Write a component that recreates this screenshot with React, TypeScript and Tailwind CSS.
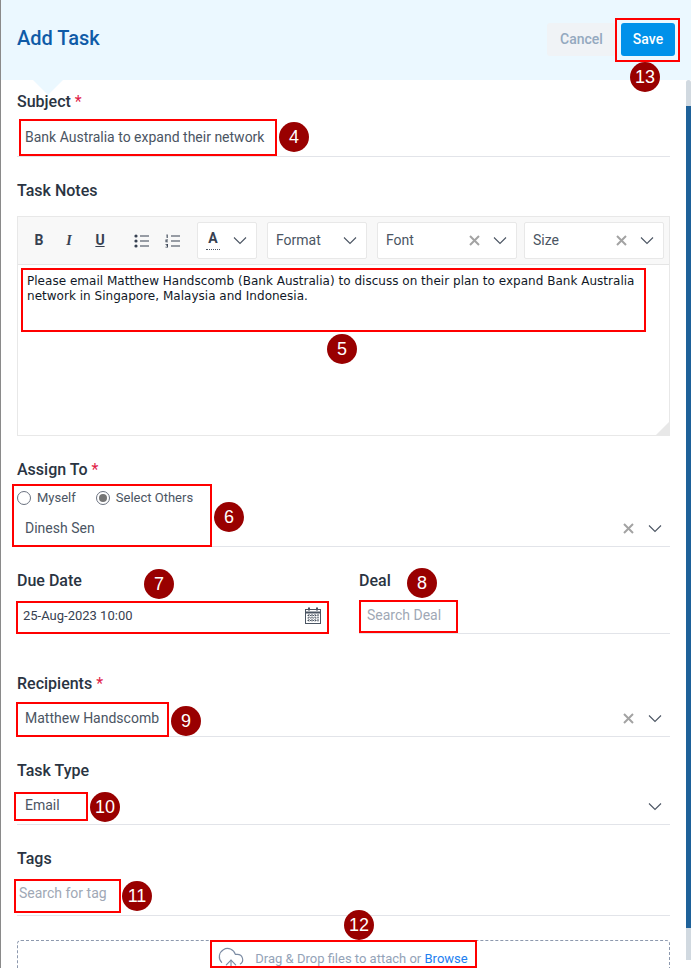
import React from 'react'
import { CloudUpload } from 'lucide-react'

const Chevron = () => (
  <svg width="16" height="9" viewBox="0 0 16 9" fill="none" stroke="#4b5563" strokeWidth="1.1" className="shrink-0"><path d="M2 1.5 8 7.5 14 1.5" /></svg>
)

const Cross = () => (
  <svg width="11" height="11" viewBox="0 0 11 11" fill="none" stroke="#a3a3a3" strokeWidth="2" className="shrink-0"><path d="M1 1 10 10M10 1 1 10" /></svg>
)

const Label = ({ text, required, className = '' }: { text: string; required?: boolean; className?: string }) => (
  <div className={`h-5 text-[16px] leading-[22px] font-medium text-[#2a3442] ${className}`}>
    {text}
    {required && <span className="text-[#e11d48] font-normal"> *</span>}
  </div>
)

const Note = ({ n, className }: { n: number; className: string }) => (
  <div className={`absolute w-[30px] h-[30px] rounded-full bg-[#990000] text-white flex items-center justify-center text-[18px] font-['Liberation_Sans',sans-serif] ${className}`}>{n}</div>
)

const Selectbox = ({ label, className, clear }: { label: string; className: string; clear?: boolean }) => (
  <div className={`h-[37px] bg-white border border-[#e8e8e8] rounded-[2px] flex items-center pl-2 pr-2 text-[14px] text-[#4b5563] ${className}`}>
    <span className="flex-1">{label}</span>
    {clear && <span className="mr-[12px]"><Cross /></span>}
    <Chevron />
  </div>
)

function Toolbar() {
  return (
    <div className="h-[48px] bg-[#f8f8f8] border-b border-[#e5e5e5] flex items-center">
      <span className="ml-[15px] w-[12px] text-center text-[14px] font-bold text-[#374151]">B</span>
      <span className="ml-[18px] w-[12px] text-center text-[14px] italic font-bold text-[#374151] font-['Liberation_Serif',serif]">I</span>
      <span className="ml-[19px] w-[12px] text-center text-[14px] font-bold underline text-[#374151]">U</span>
      <svg className="ml-[28px]" width="15" height="14" viewBox="0 0 15 14" fill="#374151">
        <circle cx="2" cy="2" r="1.6" /><circle cx="2" cy="7" r="1.6" /><circle cx="2" cy="12" r="1.6" />
        <path d="M6 1.5h9v1H6zM6 6.5h9v1H6zM6 11.5h9v1H6z" />
      </svg>
      <svg className="ml-[16px]" width="15" height="14" viewBox="0 0 15 14" fill="#374151">
        <path d="M1.5 0.5h1.2v3.5h-1zM0.5 5.5h2.5v1H1.5v1H3v.8H.5zM.5 10h2.5v3.5H.5v-.8h1.6v-.6H1v-.7h1.1v-.6H.5z" />
        <path d="M6 1.5h9v1H6zM6 6.5h9v1H6zM6 11.5h9v1H6z" />
      </svg>
      <div className="ml-[17px] w-[60px] h-[37px] bg-white border border-[#e8e8e8] rounded-[2px] flex items-center pl-2 pr-2 justify-between">
        <div className="flex flex-col items-center w-[14px]">
          <span className="text-[14px] leading-[14px] font-bold text-[#374151]">A</span>
          <span className="w-[14px] h-[2px] mt-[3px] border-b border-dotted border-[#4b5563]"></span>
        </div>
        <Chevron />
      </div>
      <Selectbox label="Format" className="ml-[10px] w-[100px]" />
      <Selectbox label="Font" className="ml-[10px] w-[140px]" clear />
      <Selectbox label="Size" className="ml-[7px] w-[140px]" clear />
    </div>
  )
}

const Underlined = ({ className = '', children }: { className?: string; children: React.ReactNode }) => (
  <div className={`border-b border-[#e2e4e9] flex items-center text-[14px] text-[#4b5563] box-content ${className}`}>{children}</div>
)

const Clearers = () => (
  <div className="ml-auto flex items-center gap-[13px] pr-[7px]">
    <Cross />
    <Chevron />
  </div>
)

export default function App() {
  return (
    <div className="relative w-[691px] h-[968px] overflow-hidden bg-white border-l border-[#8a8a8a] font-['Roboto',sans-serif]">
      <div className="h-20 bg-[#ebf8ff] flex items-center pl-4 pr-4">
        <h1 className="text-[20px] font-medium text-[#0f5ba7] -mt-1">Add Task</h1>
        <button className="ml-auto w-[69px] h-[33px] -mt-px rounded-[3px] bg-[#f0f3f6] text-[14px] font-medium text-[#94a9bf]">Cancel</button>
        <button className="ml-[5px] w-[54px] h-[33px] -mt-px rounded-[3px] bg-[#0091ea] text-[14px] font-medium text-white">Save</button>
      </div>
      <div className="absolute left-[32px] top-[80px] w-0 h-0 border-l-[15px] border-r-[15px] border-t-[15px] border-l-transparent border-r-transparent border-t-[#ebf8ff]"></div>

      <div className="absolute right-0 top-20 bottom-[8px] w-[5px] rounded-t bg-[#d1d9e0]">
        <div className="mt-[26px] h-[822px] bg-[#1e6199]"></div>
      </div>

      <div className="pl-4 w-[669px] pt-[11px]">
        <Label text="Subject" required />
        <Underlined className="mt-[9px] h-9 pl-2"><span className="mb-[2px]">Bank Australia to expand their network</span></Underlined>

        <Label text="Task Notes" className="mt-[23px]" />
        <div className="mt-4 h-[220px] border border-[#e8e8e8] relative">
          <Toolbar />
          <div className="pt-[9px] pl-[9px] pr-[20px] text-[12px] leading-[15px] tracking-[0.02px] text-[#111827] font-['DejaVu_Sans',sans-serif]">
            Please email Matthew Handscomb (Bank Australia) to discuss on their plan to expand Bank Australia network in Singapore, Malaysia and Indonesia.
          </div>
          <div className="absolute right-0 bottom-0 w-0 h-0 border-l-[13px] border-t-[13px] border-l-transparent border-t-transparent border-b-0 border-r-[13px] border-r-[#e8e8e8]"></div>
        </div>

        <Label text="Assign To" required className="mt-[23px]" />
        <div className="mt-[9px] h-5 flex items-center text-[13px] text-[#4b5563]">
          <span className="w-[14px] h-[14px] rounded-full border border-[#6b7280] bg-white"></span>
          <span className="ml-[6px]">Myself</span>
          <span className="ml-[20px] w-[14px] h-[14px] rounded-full border border-[#6b7280] bg-white flex items-center justify-center"><span className="w-2 h-2 rounded-full bg-[#757575]"></span></span>
          <span className="ml-[6px]">Select Others</span>
        </div>
        <Underlined className="mt-[2px] h-9 pl-2">
          Dinesh Sen
          <Clearers />
        </Underlined>

        <div className="mt-[23px] flex gap-[30px]">
          <div className="w-[312px]">
            <Label text="Due Date" />
            <div className="mt-[7px] h-[37px] flex items-center pl-[6px] pr-2 text-[13px] text-[#374151]">
              25-Aug-2023 10:00
              <svg className="ml-auto" width="16" height="17" viewBox="0 0 16 17" fill="none" stroke="#4b5563">
                <rect x="0.5" y="2.5" width="15" height="14" />
                <path d="M0.5 5.5h15" strokeWidth="2" />
                <path d="M4 .5v3M12 .5v3" strokeWidth="2" />
                <path d="M2.5 8.5h11M2.5 11h11M2.5 13.5h11M4 7v8M7 7v8M10 7v8M13 7v8" strokeWidth="1" strokeDasharray="1.5 1" />
              </svg>
            </div>
          </div>
          <div className="flex-1">
            <Label text="Deal" />
            <Underlined className="mt-[7px] h-9 pl-2 text-[#a0a8b5]">Search Deal</Underlined>
          </div>
        </div>

        <Label text="Recipients" required className="mt-[39px]" />
        <Underlined className="mt-[7px] h-9 pl-2">
          Matthew Handscomb
          <Clearers />
        </Underlined>

        <Label text="Task Type" className="mt-[23px]" />
        <Underlined className="mt-2 h-9 pl-2">
          <span className="mb-[2px]">Email</span>
          <div className="ml-auto pr-[7px]"><Chevron /></div>
        </Underlined>

        <Label text="Tags" className="mt-[23px]" />
        <Underlined className="mt-[11px] h-9 pl-[2px] text-[#a0a8b5]"><span className="mb-[8px]">Search for tag</span></Underlined>

        <div className="mt-6 h-[60px] border border-dashed border-[#8d99ae] rounded-[4px] pt-1 pr-[2px] flex justify-center items-start">
          <div className="flex items-center text-[13px] text-[#94a3b8]">
            <CloudUpload size={28} strokeWidth={1} color="#7b8ba3" className="mr-[10px]" />
            <span>Drag &amp; Drop files to attach or <span className="text-[#1e80f0]">Browse</span></span>
          </div>
        </div>
      </div>

      <div className="absolute left-[18px] top-[119px] w-[258px] h-[37px] border-2 border-[#ff0000]"></div>
      <div className="absolute left-[20px] top-[268px] w-[625px] h-[64px] border-2 border-[#ff0000]"></div>
      <div className="absolute left-[11px] top-[484px] w-[200px] h-[63px] border-2 border-[#ff0000]"></div>
      <div className="absolute left-[15px] top-[601px] w-[313px] h-[33px] border-2 border-[#ff0000]"></div>
      <div className="absolute left-[358px] top-[600px] w-[99px] h-[33px] border-2 border-[#ff0000]"></div>
      <div className="absolute left-[15px] top-[702px] w-[153px] h-[35px] border-2 border-[#ff0000]"></div>
      <div className="absolute left-[13px] top-[792px] w-[74px] h-[29px] border-2 border-[#ff0000]"></div>
      <div className="absolute left-[13px] top-[879px] w-[107px] h-[34px] border-2 border-[#ff0000]"></div>
      <div className="absolute left-[209px] top-[940px] w-[267px] h-[28px] border-2 border-[#ff0000]"></div>
      <div className="absolute left-[614px] top-[18px] w-[65px] h-[44px] border-2 border-[#ff0000]"></div>

      <Note n={4} className="left-[278px] top-[122px]" />
      <Note n={5} className="left-[326px] top-[334px]" />
      <Note n={6} className="left-[213px] top-[502px]" />
      <Note n={7} className="left-[143px] top-[569px]" />
      <Note n={8} className="left-[406px] top-[568px]" />
      <Note n={9} className="left-[170px] top-[706px]" />
      <Note n={10} className="left-[89px] top-[792px]" />
      <Note n={11} className="left-[121px] top-[881px]" />
      <Note n={12} className="left-[343px] top-[910px]" />
      <Note n={13} className="left-[629px] top-[62px]" />
    </div>
  )
}
